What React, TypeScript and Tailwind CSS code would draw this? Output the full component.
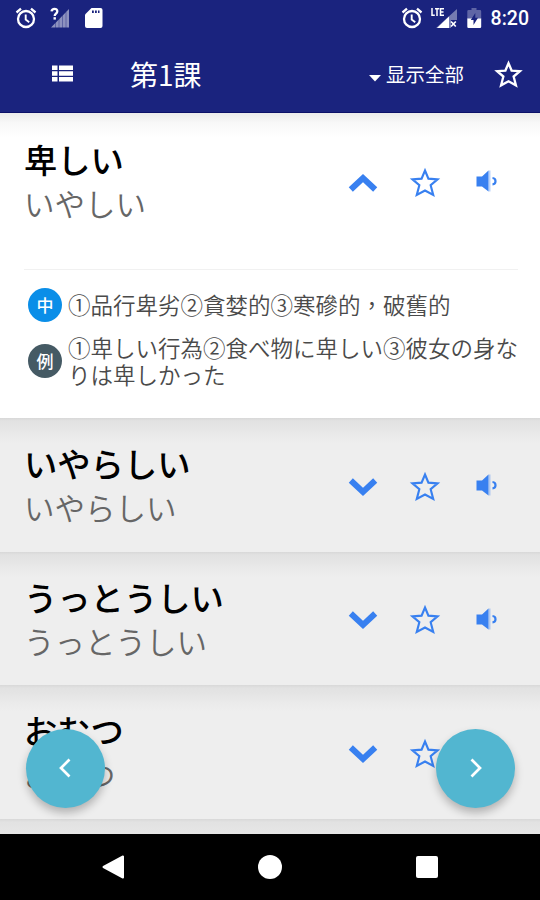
import clsx from "clsx";

interface Word {
  kanji: string;
  kana: string;
  meaning?: string;
  example?: string;
}

const words: Word[] = [
  {
    kanji: "卑しい",
    kana: "いやしい",
    meaning: "①品行卑劣②貪婪的③寒磣的，破舊的",
    example: "①卑しい行為②食べ物に卑しい③彼女の身なりは卑しかった",
  },
  { kanji: "いやらしい", kana: "いやらしい" },
  { kanji: "うっとうしい", kana: "うっとうしい" },
  { kanji: "おむつ", kana: "おむつ" },
];

function Alarm() {
  return (
    <svg width="24" height="24" fill="none" stroke="#fff">
      <circle cx="12" cy="13" r="8" strokeWidth="2.3" />
      <path d="M11.700 8.500v5l3.500 2.700" strokeWidth="1.900" />
      <path d="M2.500 6.500L7 2.700M21.500 6.500L17 2.700" strokeWidth="2.300" />
    </svg>
  );
}

function StatusBar() {
  return (
    <div className="flex h-9 items-center justify-between pr-[11px] pl-[14px]">
      <div className="flex items-center">
        <Alarm />
        <svg width="20" height="22" className="ml-[12px]">
          <path d="M19 2v18.500H1z" fill="#fff" opacity=".5" />
          <path d="M5.500 14v7M9 11v10M12.500 8v13M16 5v16" stroke="#1a237e" strokeWidth="1" opacity=".4" />
          <path d="M1.500 4.300C2 1 7.300 1 7.300 4.200 7.300 6.600 4.700 6.600 4.700 9" fill="none" stroke="#fff" strokeWidth="2.300" />
          <path d="M3.500 10.200h2.400v2.400H3.500z" fill="#fff" />
        </svg>
        <svg width="18" height="22" className="ml-[15px]">
          <path d="M6.500 1H15.500a2 2 0 0 1 2 2v16a2 2 0 0 1-2 2H2a2 2 0 0 1-2-2V7.500z" fill="#fff" />
          <path d="M7 3.500h1.800v2.500H7zM10 3.500h1.800v2.500H10zM13 3.500h1.500v2.500H13z" fill="#1a237e" />
        </svg>
      </div>
      <div className="flex items-center">
        <Alarm />
        <svg width="27" height="22" className="ml-[7px]">
          <path d="M26 2v11h-6v8H5z" fill="#fff" opacity=".4" />
          <path d="M18 9.500V21H6z" fill="#fff" />
          <path d="M20 14.500l4.800 5M24.800 14.500l-4.800 5" stroke="#fff" strokeWidth="1.700" />
          <path
            d="M1 1v7.200h2.800M4 1.700h4.200M6 1.700V9M13 1.700H9.500v6.500H13M9.500 5H12.500"
            fill="none"
            stroke="#fff"
            strokeWidth="1.500"
          />
        </svg>
        <svg width="15" height="22" className="ml-[9px]">
          <path d="M4.500 1h5v2H13a1.200 1.200 0 0 1 1.200 1.200V12H.3V4.200A1.200 1.200 0 0 1 1.500 3h3z" fill="#fff" opacity=".3" />
          <path d="M.3 11.500h13.900v8.300a1.200 1.200 0 0 1-1.200 1.200H1.500a1.200 1.200 0 0 1-1.200-1.200z" fill="#fff" />
          <path d="M8.300 6l-4.500 7h2.700v5l4.500-7.200H8.300z" fill="#1a237e" />
        </svg>
        <span className="mt-[2px] ml-[9px] font-['Roboto',sans-serif] text-[19.5px] leading-none font-medium">8:20</span>
      </div>
    </div>
  );
}

function Star({ className }: { className?: string }) {
  return (
    <svg viewBox="0 0 30 30" className={className}>
      <path
        d="M15 3.300L18.200 10.900L26.800 11.600L20.300 17.100L22.700 26.200L15 22L7.300 26.200L9.700 17.100L3.200 11.600L11.800 10.900Z"
        fill="none"
        stroke="currentColor"
      />
    </svg>
  );
}

function Toolbar() {
  return (
    <div className="flex h-[77px] items-center pr-[17px] pl-[52px]">
      <svg width="21" height="17" className="mb-[2px]">
        <path d="M0 .5h5.500v4.600H0zM7 .5h14v4.600H7zM0 6.200h5.500v4.600H0zM7 6.200h14v4.600H7zM0 11.900h5.500v4.600H0zM7 11.900h14v4.600H7z" fill="#fff" />
      </svg>
      <h1 className="mb-[2px] ml-[57px] text-[28px] leading-none">第1課</h1>
      <button className="mb-[2px] ml-auto flex items-center font-['Noto_Sans_CJK_SC',sans-serif] text-[19.5px] leading-none">
        <svg width="12" height="7" className="mt-[9px] mr-[5px]">
          <path d="M0 0h12L6 6.500z" fill="currentColor" />
        </svg>
        显示全部
      </button>
      <Star className="ml-[30px] size-[29px] stroke-[2.4]" />
    </div>
  );
}

function Chevron({ up }: { up?: boolean }) {
  return (
    <svg width="30" height="20" className={clsx(up && "rotate-180")}>
      <path d="M2.800 3.500L15 15L27.200 3.500" fill="none" stroke="currentColor" strokeWidth="6" />
    </svg>
  );
}

function Speaker() {
  return (
    <svg width="22" height="24" className="mb-[3px]">
      <path d="M.5 7.500h5.500L12.500 1.500v21L6 17.500H.5z" fill="currentColor" />
      <path d="M12.500 1.500H14.500v21h-2z" fill="currentColor" opacity=".35" />
      <path d="M16.500 9c4 .3 4 6 0 6.300" fill="none" stroke="currentColor" strokeWidth="2.200" />
    </svg>
  );
}

function Badge({ label, className }: { label: string; className: string }) {
  return (
    <span
      className={clsx(
        "flex size-[34px] shrink-0 items-center justify-center rounded-full pb-px text-[17px] leading-none font-medium text-white",
        className,
      )}
    >
      {label}
    </span>
  );
}

function WordCard({ word }: { word: Word }) {
  const open = Boolean(word.meaning);

  return (
    <li
      className={clsx(
        "shrink-0",
        open
          ? "h-[305px] bg-[linear-gradient(#ebebeb,#f8f8f8_10px,#fff_24px)] pt-[24px]"
          : "h-[133.5px] bg-[linear-gradient(#d8d8d8,#e2e2e2_3px,#e4e4e4_8px,#eaeaea_17px,#eee_26px)] pt-[23px]",
      )}
    >
      <div className="flex items-center pr-[22px] pl-[24px]">
        <div>
          <h2 className="text-[33.3px] leading-[44px] font-medium text-black">{word.kanji}</h2>
          <p className="text-[30.5px] leading-[44px] font-[350] text-[#666]">{word.kana}</p>
        </div>
        <div className="mt-[3px] ml-auto grid grid-cols-[62px_62px_62px] items-center justify-items-center text-[#3880f0]">
          <Chevron up={open} />
          <Star className="size-[32px] stroke-2" />
          <Speaker />
        </div>
      </div>

      {open && (
        <div className="mr-[22px] ml-[24px] mt-[44px] border-t border-[#f1f1f1] pt-[18px] text-[22.5px] leading-[27px] font-[350] text-[#4a4a4a]">
          <div className="flex items-center pl-1">
            <Badge label="中" className="bg-[#0a8ee8]" />
            <p className="mb-px ml-[6px] font-['Noto_Sans_CJK_TC',sans-serif] whitespace-nowrap" lang="zh-TW">
              {word.meaning}
            </p>
          </div>
          <div className="mt-[12px] flex items-center pl-1">
            <Badge label="例" className="bg-[#455a64]" />
            <p className="-mr-1 ml-[6px] w-[454px] break-all">{word.example}</p>
          </div>
        </div>
      )}
    </li>
  );
}

function PageButton({ next }: { next?: boolean }) {
  return (
    <button
      className={clsx(
        "absolute top-[728.5px] flex size-[79px] items-center justify-center rounded-full bg-[#52b6d0] shadow-[0_5px_9px_rgba(0,0,0,0.25)]",
        next ? "left-[436px]" : "left-[25.5px]",
      )}
    >
      <svg width="14" height="20" className={clsx(next && "rotate-180")}>
        <path d="M11.500 1.500L3 10l8.500 8.500" fill="none" stroke="#fff" strokeWidth="2.700" />
      </svg>
    </button>
  );
}

function NavigationBar() {
  return (
    <nav className="grid h-[66px] shrink-0 grid-cols-[157px_157px_157px] items-center justify-center justify-items-center bg-black">
      <svg width="24" height="26">
        <path d="M2.500 13L22 2.500v21z" fill="#fff" stroke="#fff" strokeWidth="2" strokeLinejoin="round" />
      </svg>
      <span className="size-6 rounded-full bg-white" />
      <span className="size-[22px] rounded-[2px] bg-white" />
    </nav>
  );
}

export default function App() {
  return (
    <div className="relative flex h-[900px] w-[540px] flex-col overflow-hidden bg-[#eee] font-['Noto_Sans_CJK_JP','Noto_Sans_CJK_TC',sans-serif]">
      <header className="h-[113px] shrink-0 border-b border-[#0b1068] bg-[#1a237e] text-white">
        <StatusBar />
        <Toolbar />
      </header>
      <ul className="flex min-h-0 flex-1 flex-col overflow-hidden">
        {words.map((word) => (
          <WordCard key={word.kanji} word={word} />
        ))}
        <li className="flex-1 bg-[linear-gradient(#d8d8d8,#e2e2e2_3px,#e6e6e6)]" />
      </ul>
      <NavigationBar />
      <PageButton />
      <PageButton next />
    </div>
  );
}
